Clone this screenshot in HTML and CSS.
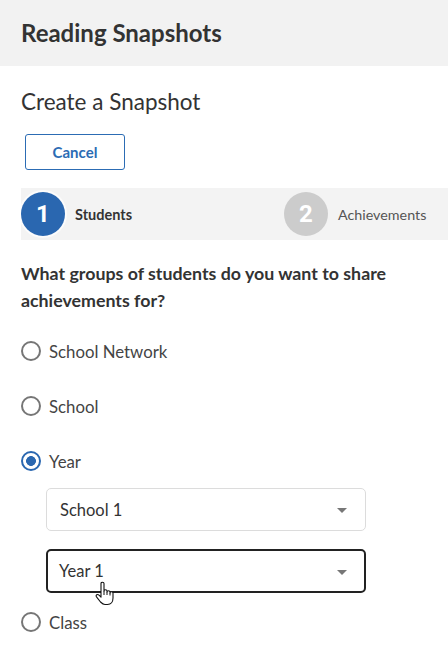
FILE: index.html
```html
<!DOCTYPE html>
<html lang="en">
<head>
<meta charset="utf-8">
<title>Reading Snapshots</title>
<link rel="stylesheet" href="styles.css">
</head>
<body>
<header class="app-header">
  <h1 class="app-title">Reading Snapshots</h1>
</header>
<main class="page">
  <h2 class="page-title">Create a Snapshot</h2>
  <button class="btn-cancel" type="button">Cancel</button>

  <div class="stepper">
    <div class="step step-active">
      <span class="step-num">1</span>
      <span class="step-label">Students</span>
    </div>
    <div class="step">
      <span class="step-num">2</span>
      <span class="step-label">Achievements</span>
    </div>
  </div>

  <p class="question">What groups of students do you want to share achievements for?</p>

  <div class="options">
    <label class="radio-row"><span class="radio"></span><span class="radio-label">School Network</span></label>
    <label class="radio-row"><span class="radio"></span><span class="radio-label">School</span></label>
    <label class="radio-row"><span class="radio radio-checked"></span><span class="radio-label">Year</span></label>
    <div class="selects">
      <div class="select">
        <span class="select-text">School 1</span>
        <span class="caret"></span>
      </div>
      <div class="select select-focus">
        <span class="select-text">Year 1</span>
        <span class="caret"></span>
        <svg class="cursor" width="20" height="25" viewBox="0 0 20 25" aria-hidden="true">
          <path d="M6,2.5 C6,0.8 9,0.8 9,2.5 V10 C9,8.4 12,8.4 12,10 V11 C12,9.4 15,9.4 15,11 V12 C15,10.4 18,10.4 18,12 V17 C18,20.5 16,23.5 12.5,23.5 H10 C8,23.5 7,22.5 5.5,21 L1.5,15.8 C0.4,14.2 2.4,12.6 4,14.2 L6,16.2 Z" fill="#fff" stroke="#111" stroke-width="1.1" stroke-linejoin="round"/>
          <path d="M9,10 V14 M12,11 V14 M15,12 V14.5" fill="none" stroke="#111" stroke-width="1"/>
        </svg>
      </div>
    </div>
    <label class="radio-row"><span class="radio"></span><span class="radio-label">Class</span></label>
  </div>
</main>
</body>
</html>
```

FILE: styles.css
```css
* { box-sizing: border-box; }
html, body { margin: 0; padding: 0; background: #fff; }
body {
  font-family: Lato, "Noto Sans", "Liberation Sans", sans-serif;
  color: #333;
  width: 448px;
  overflow: hidden;
}

.app-header {
  background: #f2f2f2;
  height: 66px;
  padding-left: 21px;
}
.app-title {
  margin: 0;
  font-size: 24px;
  font-weight: 700;
  line-height: 66px;
  color: #333;
}

.page { padding: 0; }

.page-title {
  margin: 21px 0 0 21px;
  font-size: 22.5px;
  font-weight: 400;
  line-height: 30px;
  color: #333;
}

.btn-cancel {
  display: block;
  margin: 17px 0 0 25px;
  width: 100px;
  height: 36px;
  background: #fff;
  border: 1px solid #2c6cb4;
  border-radius: 3px;
  color: #2c6cb4;
  font-family: inherit;
  font-size: 15px;
  font-weight: 700;
  padding: 0;
}

.stepper {
  display: flex;
  align-items: center;
  margin: 18px 0 0 21px;
  height: 52px;
  background: #f3f3f3;
}
.step {
  display: flex;
  align-items: center;
  gap: 10px;
}
.step-active { width: 263px; }
.step-num {
  display: flex;
  align-items: center;
  justify-content: center;
  width: 44px;
  height: 44px;
  border-radius: 50%;
  background: #cccccc;
  color: #fff;
  font-family: Roboto, "Liberation Sans", sans-serif;
  font-size: 24px;
  font-weight: 700;
}
.step-active .step-num {
  background: #2a67b0;
  box-shadow: 0 0 0 2px rgba(255,255,255,0.7);
}
.step-label {
  font-size: 14.3px;
  color: #555;
}
.step-active .step-label {
  font-size: 14.5px;
  font-weight: 700;
  color: #333;
}

.question {
  margin: 20px 21px 0 21px;
  font-size: 17.8px;
  font-weight: 700;
  line-height: 27px;
  color: #333;
}

.options {
  display: flex;
  flex-direction: column;
  margin: 25px 0 0 21px;
}
.radio-row {
  display: flex;
  align-items: center;
  gap: 8px;
  height: 24px;
  margin-bottom: 31px;
}
.radio-row:nth-of-type(3) { margin-bottom: 0; }
.radio {
  width: 20px;
  height: 20px;
  border: 2px solid #767676;
  border-radius: 50%;
  background: #fff;
  flex: none;
}
.radio-checked {
  border-color: #2a67b0;
  background: radial-gradient(circle, #2a67b0 0 4.6px, #fff 5.2px);
}
.radio-label {
  font-size: 16.8px;
  color: #444;
}

.selects {
  display: flex;
  flex-direction: column;
  gap: 18px;
  margin: 15px 0 17px 25px;
  width: 320px;
}
.select {
  position: relative;
  display: flex;
  align-items: center;
  justify-content: space-between;
  height: 43px;
  padding: 0 18px 0 13px;
  border: 1px solid #dcdcdc;
  border-radius: 5px;
  background: #fff;
}
.select-focus {
  height: 44px;
  border: 2px solid #222;
  padding: 0 17px 0 11px;
}
.select-text {
  font-size: 16.5px;
  color: #333;
}
.caret {
  width: 0;
  height: 0;
  border-left: 5px solid transparent;
  border-right: 5px solid transparent;
  border-top: 5px solid #777;
  margin-top: 2px;
}
.cursor {
  position: absolute;
  left: 47px;
  top: 30px;
}
```
